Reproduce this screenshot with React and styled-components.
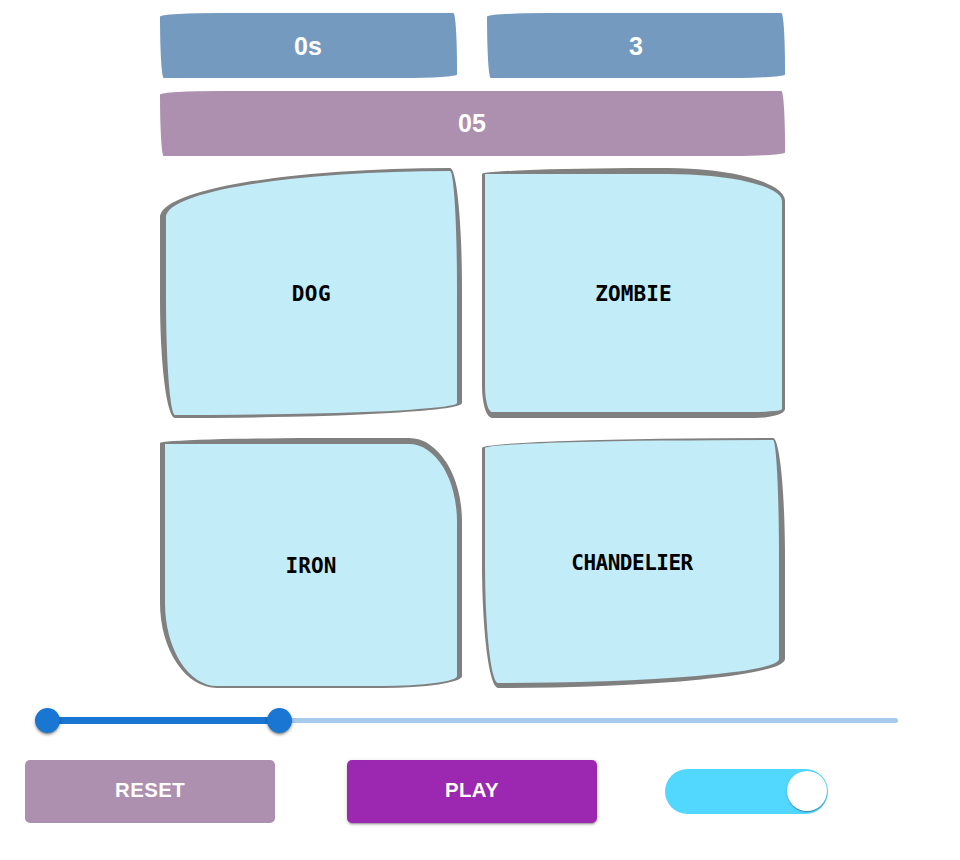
import React from "react";
import styled, { createGlobalStyle } from "styled-components";

const GlobalStyle = createGlobalStyle`
  * { box-sizing: border-box; }
  body { margin: 0; background: #fff; font-family: "Liberation Sans", Arial, sans-serif; }
`;

const Page = styled.main`
  width: 960px;
  height: 860px;
  padding-top: 13px;
  overflow: hidden;
`;

const Board = styled.section`
  width: 625px;
  margin-left: 160px;
`;

const StatRow = styled.div`
  display: grid;
  grid-template-columns: ${(p) => p.$columns};
  column-gap: 30px;
  margin-bottom: ${(p) => p.$gap}px;
`;

const Stat = styled.div`
  display: flex;
  align-items: center;
  justify-content: center;
  height: 65px;
  padding: ${(p) => p.$inset};
  background: ${(p) => p.$color};
  border-radius: 255px 15px 225px 15px / 15px 225px 15px 255px;
  color: #fff;
  font-size: 25px;
  font-weight: 700;
  line-height: 28px;
`;

const CardGrid = styled.div`
  display: grid;
  grid-template-columns: 302px 303px;
  grid-auto-rows: 250px;
  gap: 20px;
`;

const Card = styled.button`
  display: flex;
  align-items: center;
  justify-content: center;
  padding: ${(p) => p.$drop}px 0 0;
  background: #c2ecf8;
  border: solid #808080;
  border-width: ${(p) => p.$border};
  border-radius: ${(p) => p.$radius};
  color: #000;
  font: 700 21px/24px "Comic Sans MS", "DejaVu Sans Mono", monospace;
  letter-spacing: ${(p) => p.$spacing}px;
`;

const Slider = styled.div`
  display: flex;
  align-items: center;
  width: 863px;
  height: 25px;
  margin: 20px 0 27px 35px;
`;

const Thumb = styled.span`
  flex: none;
  z-index: 1;
  width: 25px;
  height: 25px;
  border-radius: 50%;
  background: #1976d2;
  box-shadow: 0 3px 1px -2px rgba(0, 0, 0, 0.2), 0 2px 2px rgba(0, 0, 0, 0.14), 0 1px 5px rgba(0, 0, 0, 0.12), 0 2px 3px rgba(0, 0, 0, 0.15);
`;

const Track = styled.span`
  flex: none;
  width: 211px;
  height: 7px;
  margin: 0 -2px;
  background: #1976d2;
`;

const Rail = styled.span`
  flex: 1;
  height: 5px;
  margin-left: -2px;
  border-radius: 0 3px 3px 0;
  background: #a7caed;
`;

const Controls = styled.div`
  display: flex;
  align-items: center;
  margin-left: 25px;
`;

const ActionButton = styled.button`
  width: 250px;
  height: 63px;
  margin-right: ${(p) => p.$after}px;
  padding: 0 0 2px;
  border: 0;
  border-radius: 5px;
  background: ${(p) => p.$color};
  box-shadow: ${(p) => (p.$raised ? "0 3px 1px -2px rgba(0,0,0,.2), 0 2px 2px rgba(0,0,0,.14), 0 1px 5px rgba(0,0,0,.12)" : "none")};
  color: #fff;
  font: 700 20.4px/35px "Liberation Sans", Arial, sans-serif;
  letter-spacing: 0.4px;
`;

const Toggle = styled.div`
  display: flex;
  justify-content: flex-end;
  width: 163px;
  height: 45px;
  padding: 2px 1px;
  border-radius: 23px;
  background: #52d7ff;
`;

const Knob = styled.span`
  width: 40px;
  height: 40px;
  border-radius: 50%;
  background: #fff;
  box-shadow: 0 2px 1px -1px rgba(0, 0, 0, 0.2), 0 1px 1px rgba(0, 0, 0, 0.14), 0 1px 3px rgba(0, 0, 0, 0.12);
`;

const cards = [
  {
    word: "DOG",
    border: "3px 5px 3px 6px",
    radius: "290px 12px 278px 15px / 49px 122px 15px 120px",
    spacing: 0.6,
    drop: 1,
  },
  {
    word: "ZOMBIE",
    border: "6px 3px 6px 3px",
    radius: "185px 118px 30px 10px / 6px 33px 9px 32px",
    spacing: 0.1,
    drop: 1,
  },
  {
    word: "IRON",
    border: "6px 5px 2px 5px",
    radius: "172px 53px 80px 57px / 5px 84px 12px 85px",
    spacing: 0.1,
    drop: 1,
  },
  {
    word: "CHANDELIER",
    border: "2px 6px 5px 3px",
    radius: "290px 12px 287px 16px / 10px 122px 29px 125px",
    spacing: -0.5,
    drop: 3,
  },
];

export default function App() {
  return (
    <>
      <GlobalStyle />
      <Page>
        <Board>
          <StatRow $columns="297px 298px" $gap={13}>
            <Stat $color="#759abf" $inset="1px 1px 0 0">0s</Stat>
            <Stat $color="#759abf" $inset="1px 0 0 0">3</Stat>
          </StatRow>
          <StatRow $columns="1fr" $gap={12}>
            <Stat $color="#ad8fb0" $inset="0 1px 1px 0">05</Stat>
          </StatRow>
          <CardGrid>
            {cards.map((c) => (
              <Card key={c.word} $border={c.border} $radius={c.radius} $spacing={c.spacing} $drop={c.drop}>
                {c.word}
              </Card>
            ))}
          </CardGrid>
        </Board>
        <Slider>
          <Thumb />
          <Track />
          <Thumb />
          <Rail />
        </Slider>
        <Controls>
          <ActionButton $color="#ad8fb0" $after={72}>RESET</ActionButton>
          <ActionButton $color="#9c27b0" $after={68} $raised>PLAY</ActionButton>
          <Toggle>
            <Knob />
          </Toggle>
        </Controls>
      </Page>
    </>
  );
}
